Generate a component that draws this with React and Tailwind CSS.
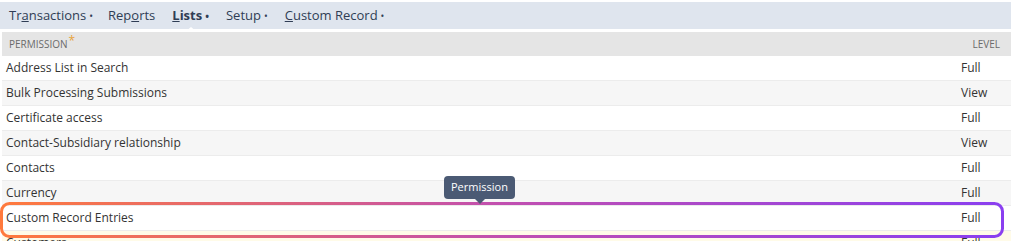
import React from 'react';

const rows = [
  { name: 'Address List in Search', level: 'Full', bg: 'bg-white' },
  { name: 'Bulk Processing Submissions', level: 'View', bg: 'bg-[#f6f6f6]' },
  { name: 'Certificate access', level: 'Full', bg: 'bg-white' },
  { name: 'Contact-Subsidiary relationship', level: 'View', bg: 'bg-[#f6f6f6]' },
  { name: 'Contacts', level: 'Full', bg: 'bg-white' },
  { name: 'Currency', level: 'Full', bg: 'bg-[#f6f6f6]' },
  { name: 'Custom Record Entries', level: 'Full', bg: 'bg-white' },
  { name: 'Customers', level: 'Full', bg: 'bg-[#fffbe8]' },
];

function Dot() {
  return <span className="ml-[3px] text-[10px] align-middle">•</span>;
}

function NavTabs() {
  return (
    <div className="flex h-[27px] items-center gap-[12px] bg-[#dfe5ee] pl-[9px] text-[13px] text-[#2f3d55]">
      <span>
        Tr<u>a</u>nsactions
        <Dot />
      </span>
      <span className="ml-[3px]">
        Rep<u>o</u>rts
      </span>
      <span className="relative ml-[5px] font-bold">
        <u>L</u>ists
        <Dot />
        <span className="absolute left-[13px] top-[21px] h-0 w-0 border-x-[6px] border-b-[5px] border-x-transparent border-b-white" />
      </span>
      <span className="ml-[5px]">
        Setup
        <Dot />
      </span>
      <span className="ml-[5px]">
        <u>C</u>ustom Record
        <Dot />
      </span>
    </div>
  );
}

function Highlight() {
  return (
    <svg className="pointer-events-none absolute left-0 top-[202px]" width="1005" height="37" viewBox="0 0 1005 37">
      <defs>
        <linearGradient id="hl" x1="0" y1="0" x2="1" y2="0">
          <stop offset="0" stopColor="#ff7a3d" />
          <stop offset="0.5" stopColor="#c14fb0" />
          <stop offset="1" stopColor="#8a3ff0" />
        </linearGradient>
      </defs>
      <rect x="1.5" y="1.5" width="1001" height="33" rx="8" fill="none" stroke="url(#hl)" strokeWidth="3" />
    </svg>
  );
}

export default function App() {
  return (
    <div className="relative h-[241px] w-[1011px] overflow-hidden bg-white pt-[2px] font-['Open_Sans',sans-serif]">
      <NavTabs />
      <div className="mt-[3px] pl-[2px]">
        <div className="flex h-[24px] items-center justify-between bg-[#e5e5e5] pl-[7px] pr-[11px] text-[10px] text-[#6b6b6b]">
          <span>
            PERMISSION
            <span className="relative -top-[3px] ml-[1px] text-[12px] text-[#e8a33a]">*</span>
          </span>
          <span>LEVEL</span>
        </div>
        {rows.map((r) => (
          <div
            key={r.name}
            className={`flex h-[25px] items-center border-b border-[#ececec] pl-[4px] text-[12px] text-[#333] ${r.bg}`}
          >
            <span className="flex-1">{r.name}</span>
            <span className="w-[50px]">{r.level}</span>
          </div>
        ))}
      </div>

      <Highlight />

      <div className="absolute left-[444px] top-[176px] flex h-[23px] items-center rounded-[4px] bg-[#4b5a74] px-[7px] text-[11px] text-white">
        Permission
        <span className="absolute left-[31px] top-[23px] h-0 w-0 border-x-[5px] border-t-[5px] border-x-transparent border-t-[#4b5a74]" />
      </div>
    </div>
  );
}
